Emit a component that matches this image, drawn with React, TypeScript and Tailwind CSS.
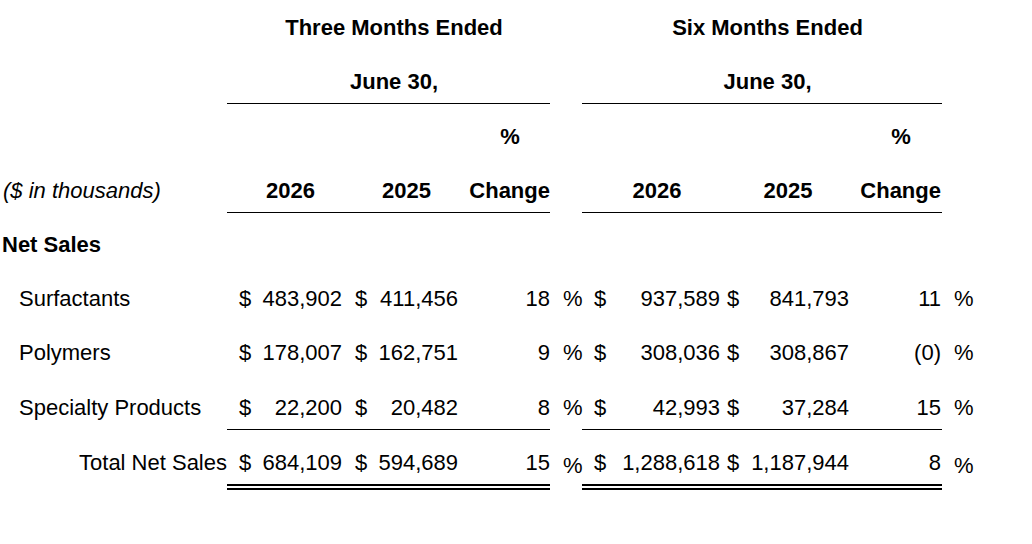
import * as React from 'react';

type Row = {
  label: string;
  indent?: 'sub' | 'total';
  a: [string, string, string];
  b: [string, string, string];
  border?: 'single' | 'double';
};

const rows: Row[] = [
  { label: 'Surfactants', indent: 'sub', a: ['483,902', '411,456', '18'], b: ['937,589', '841,793', '11'] },
  { label: 'Polymers', indent: 'sub', a: ['178,007', '162,751', '9'], b: ['308,036', '308,867', '(0)'] },
  {
    label: 'Specialty Products',
    indent: 'sub',
    a: ['22,200', '20,482', '8'],
    b: ['42,993', '37,284', '15'],
    border: 'single',
  },
  {
    label: 'Total Net Sales',
    indent: 'total',
    a: ['684,109', '594,689', '15'],
    b: ['1,288,618', '1,187,944', '8'],
    border: 'double',
  },
];

const cell = 'flex items-end pb-[9.5px] leading-[25px]';

function MoneyCell({ value, pad, border }: { value: string; pad: string; border?: string }) {
  return (
    <div className={`${cell} justify-between ${pad} ${border ?? ''}`}>
      <span>$</span>
      <span>{value}</span>
    </div>
  );
}

export default function App() {
  return (
    <div
      className="h-[544px] w-[1032px] bg-white text-[22px] text-black"
      style={{ fontFamily: '"Liberation Sans", Arial, sans-serif' }}
    >
      <div className="grid grid-cols-[227px_121px_116px_86px_32px_141px_132px_87px_1fr]">
        {/* period headings */}
        <div className="h-[49px]" />
        <div className={`${cell} col-span-3 h-[49px] justify-center pl-[11px] font-bold`}>Three Months Ended</div>
        <div />
        <div className={`${cell} col-span-3 h-[49px] justify-center pl-[11px] font-bold`}>Six Months Ended</div>
        <div />

        <div className="h-[55px]" />
        <div className={`${cell} col-span-3 h-[55px] justify-center border-b border-black pl-[11px] font-bold`}>
          June 30,
        </div>
        <div />
        <div className={`${cell} col-span-3 h-[55px] justify-center border-b border-black pl-[11px] font-bold`}>
          June 30,
        </div>
        <div />

        {/* % row */}
        <div className="h-[54px]" />
        <div className="col-span-2" />
        <div className={`${cell} justify-end font-bold`}>
          <span className="w-[80px] text-center">%</span>
        </div>
        <div className="col-span-3" />
        <div className={`${cell} justify-end pr-[1px] font-bold`}>
          <span className="w-[80px] text-center">%</span>
        </div>
        <div />

        {/* year row */}
        <div className={`${cell} h-[55px] border-b border-transparent pl-[3px] italic`}>($ in thousands)</div>
        <div className={`${cell} justify-center border-b border-black pl-[12px] pr-[6px] font-bold`}>2026</div>
        <div className={`${cell} justify-center border-b border-black pl-[7px] pr-[6px] font-bold`}>2025</div>
        <div className={`${cell} justify-end border-b border-black font-bold`}>Change</div>
        <div />
        <div className={`${cell} justify-center border-b border-black pl-[12px] pr-[3px] font-bold`}>2026</div>
        <div className={`${cell} justify-center border-b border-black pl-[4px] pr-[6px] font-bold`}>2025</div>
        <div className={`${cell} justify-end border-b border-black pr-[1px] font-bold`}>Change</div>
        <div />

        <div className={`${cell} col-span-9 h-[53px] pl-[2px] font-bold`}>Net Sales</div>

        {rows.map((r) => {
          const line =
            r.border === 'single'
              ? 'border-b border-black'
              : r.border === 'double'
                ? 'border-b-[6px] border-double border-black'
                : '';
          const ghost =
            r.border === 'single'
              ? 'border-b border-transparent'
              : r.border === 'double'
                ? 'border-b-[6px] border-transparent'
                : '';
          // the % sign on the total row sits a little lower than the figures
          const pctGhost =
            r.border === 'single'
              ? 'border-b border-transparent'
              : r.border === 'double'
                ? 'border-b-[3px] border-transparent'
                : '';
          const h = r.border === 'single' ? 'h-[56px]' : r.border === 'double' ? 'h-[60px]' : 'h-[54px]';
          return (
            <React.Fragment key={r.label}>
              <div
                className={`${cell} ${h} ${ghost} ${
                  r.indent === 'total' ? 'justify-end' : 'pl-[19px]'
                }`}
              >
                {r.label}
              </div>
              <MoneyCell value={r.a[0]} pad="pl-[12px] pr-[6px]" border={line} />
              <MoneyCell value={r.a[1]} pad="pl-[7px] pr-[6px]" border={line} />
              <div className={`${cell} justify-end ${line}`}>{r.a[2]}</div>
              <div className={`${cell} pl-[13px] ${pctGhost}`}>%</div>
              <MoneyCell value={r.b[0]} pad="pl-[12px] pr-[3px]" border={line} />
              <MoneyCell value={r.b[1]} pad="pl-[4px] pr-[6px]" border={line} />
              <div className={`${cell} justify-end pr-[1px] ${line}`}>{r.b[2]}</div>
              <div className={`${cell} pl-[12px] ${pctGhost}`}>%</div>
            </React.Fragment>
          );
        })}
      </div>
    </div>
  );
}
